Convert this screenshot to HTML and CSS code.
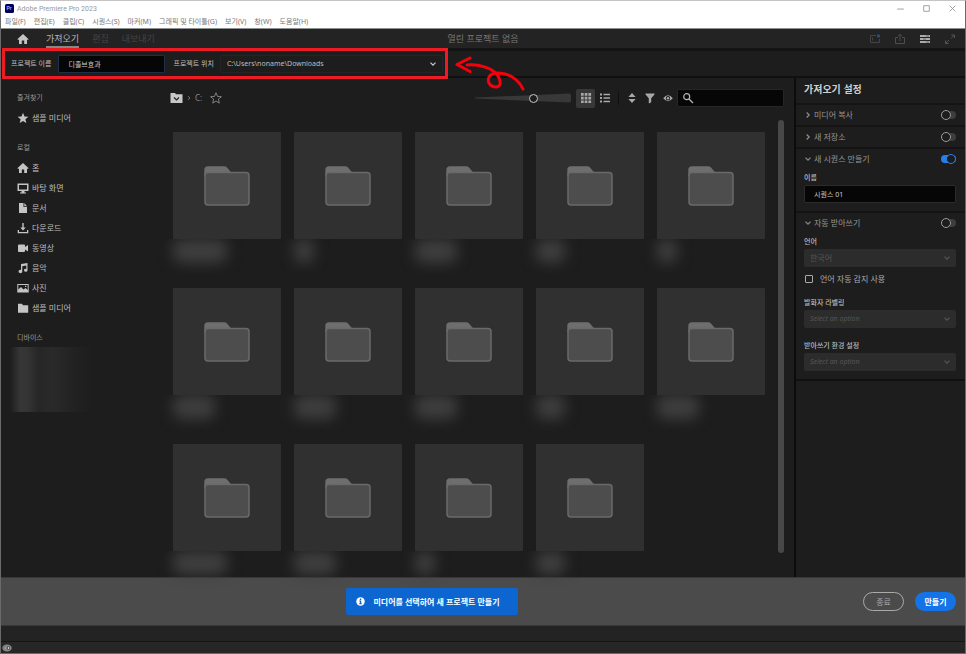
FILE: index.html
```html
<!DOCTYPE html>
<html lang="ko">
<head>
<meta charset="utf-8">
<meta name="viewport" content="width=device-width, initial-scale=1">
<title>Adobe Premiere Pro 2023</title>
<link rel="stylesheet" href="styles.css">
</head>
<body>
<svg class="defs" aria-hidden="true">
  <symbol id="home" viewBox="0 0 12 12"><path d="M6 1 .6 6v.8H2V11h2.8V7.6h2.4V11H10V6.800h1.400V6z"/></symbol>
  <symbol id="star" viewBox="0 0 12 12"><path d="m6 .8 1.500 3.600 3.900.3-3 2.500.9 3.900L6 9l-3.300 2.100.9-3.900-3-2.500 3.900-.3z"/></symbol>
  <symbol id="chev" viewBox="0 0 8 8"><path d="m1.500 2.700 2.500 2.500 2.500-2.500" fill="none" stroke="currentColor" stroke-width="1.200"/></symbol>
  <symbol id="folder" viewBox="0 0 46 40">
    <path d="M.3 8V4q0-3.700 3.700-3.700h16q2 0 3 1.200l4 4.800v4H.3z" fill="#6e6e6e"/>
    <rect x="1" y="6.500" width="44" height="32.500" rx="3" fill="#4d4d4d" stroke="#6a6a6a" stroke-width="1.500"/>
  </symbol>
</svg>
<div class="window">
  <header class="titlebar">
    <svg class="app-logo" viewBox="0 0 9 9" aria-hidden="true"><rect width="9" height="9" rx="1.500" fill="#00005b"/><text x="1.500" y="6.300" fill="#a9a9ff">Pr</text></svg>
    <span class="app-title">Adobe Premiere Pro 2023</span>
    <div class="window-buttons">
      <button aria-label="최소화"><svg viewBox="0 0 8 8"><path d="M1 4.500h6"/></svg></button>
      <button aria-label="최대화"><svg viewBox="0 0 8 8"><path d="M1.500 1.500h5v5h-5z"/></svg></button>
      <button aria-label="닫기"><svg viewBox="0 0 8 8"><path d="m1.500 1.500 5 5m0-5-5 5"/></svg></button>
    </div>
  </header>
  <nav class="menubar">
    <a href="#">파일(F)</a><a href="#">편집(E)</a><a href="#">클립(C)</a><a href="#">시퀀스(S)</a><a href="#">마커(M)</a><a href="#">그래픽 및 타이틀(G)</a><a href="#">보기(V)</a><a href="#">창(W)</a><a href="#">도움말(H)</a>
  </nav>
  <div class="tabbar">
    <nav class="tabs">
      <a href="#" class="home-link" aria-label="홈"><svg class="icon"><use href="#home"/></svg></a>
      <a href="#" class="tab active">가져오기</a>
      <a href="#" class="tab">편집</a>
      <a href="#" class="tab">내보내기</a>
    </nav>
    <span class="project-state">열린 프로젝트 없음</span>
    <div class="tab-tools">
      <button aria-label="작업 영역"><svg viewBox="0 0 12 12" fill="none" stroke="#444"><path d="M7 2.500H1.500v7h9V6"/><path d="M3.500 4.500v3"/><circle cx="9.500" cy="3" r="1.700" fill="#1f5088" stroke="none"/></svg></button>
      <button aria-label="내보내기"><svg viewBox="0 0 12 12" fill="none" stroke="#4d4d4d"><path d="M4 4.500H1.500v6h9v-6H8M6 8V1.500M4 3.200l2-2 2 2"/></svg></button>
      <button aria-label="진행률"><svg viewBox="0 0 12 12"><path d="M1 2h10v2H1zM1 5h10v2H1zM1 8h10v2H1z" fill="#aaa"/><path d="M7 2.500h3v1H7zM4 5.500h3v1H4zM7 8.500h3v1H7z" fill="#666"/></svg></button>
      <button aria-label="전체 화면"><svg viewBox="0 0 12 12" fill="none" stroke="#555"><path d="M7.500 2h3v3m0-3L7 5.500M4.500 10.500h-3v-3m0 3L5 7"/></svg></button>
    </div>
  </div>
  <section class="project-row">
    <label for="pname">프로젝트 이름</label>
    <input id="pname" class="field name-field" value="디졸브효과">
    <label for="ploc" class="loc-label">프로젝트 위치</label>
    <div class="select-wrap location">
      <select id="ploc"><option>C:\Users\noname\Downloads</option></select>
      <svg class="chev"><use href="#chev"/></svg>
    </div>
    <div class="highlight"></div>
    <svg class="arrow" viewBox="0 0 72 34" aria-hidden="true"><path d="M15 2 2 8.500 15 15.500M12 9C24 8 38 12 43 20c4 7 2 11-2 11-6 0-9-5-7-10 2-4 8-5 16-3 8 2 15 8 18 15"/></svg>
  </section>
  <main class="workspace">
    <aside class="sidebar">
      <h2>즐겨찾기</h2>
      <ul>
        <li><a href="#"><svg class="icon"><use href="#star"/></svg>샘플 미디어</a></li>
      </ul>
      <h2>로컬</h2>
      <ul>
        <li><a href="#"><svg class="icon"><use href="#home"/></svg>홈</a></li>
        <li><a href="#"><svg class="icon" viewBox="0 0 12 12"><path d="M.5 1.500h11v7.500H7.500v1.500H9v1H3v-1h1.500V9h-4zM2 3v4.500h8V3z" fill-rule="evenodd"/></svg>바탕 화면</a></li>
        <li><a href="#"><svg class="icon" viewBox="0 0 12 12"><path d="M2 1h4.500v4H10v6H2zM7.300 1 10 4.200H7.300z"/></svg>문서</a></li>
        <li><a href="#"><svg class="icon" viewBox="0 0 12 12"><path d="M5.300 1h1.400v4.500h2L6 8.500 3.300 5.500h2zM.7 8H2v2h8V8h1.300v3.300H.7z"/></svg>다운로드</a></li>
        <li><a href="#"><svg class="icon" viewBox="0 0 12 12"><path d="M1 3.500q0-1 1-1h5q1 0 1 1V5l3-2v6.500L8 7.500V9q0 1-1 1H2q-1 0-1-1z"/></svg>동영상</a></li>
        <li><a href="#"><svg class="icon" viewBox="0 0 12 12"><path d="m4 2 6.500-1v7.500a1.800 1.500 0 1 1-1.200-1.700V3.500l-4 .7v5.500A1.900 1.600 0 1 1 4 8z"/></svg>음악</a></li>
        <li><a href="#"><svg class="icon" viewBox="0 0 12 12"><path fill-rule="evenodd" d="M.3 2h11.400v8.500H.3zm1 1v4.500L4 5l2.500 2.500L8.500 6l2.200 2V3zM8 3.700h1.300V5H8z"/></svg>사진</a></li>
        <li><a href="#"><svg class="icon" viewBox="0 0 12 12"><path d="M1 1.700h4l1 1.500h5.200v7.500H1z"/></svg>샘플 미디어</a></li>
      </ul>
      <h2>디바이스</h2>
      <div class="devices"></div>
    </aside>
    <section class="browser">
      <div class="toolbar">
        <div class="crumbs">
          <button aria-label="폴더"><svg viewBox="0 0 13 12"><path d="M.5 1h4.500l1 1.300h6.500V11H.5z" fill="#c8c8c8"/><path d="m4 5.500 2.500 2.500L9 5.500" fill="none" stroke="#222" stroke-width="1.200"/></svg></button>
          <svg class="crumb-sep"><use href="#chev"/></svg>
          <a href="#">C:</a>
          <button class="fav" aria-label="즐겨찾기에 추가"><svg class="outline"><use href="#star"/></svg></button>
        </div>
        <div class="zoom">
          <svg viewBox="0 0 96 10" preserveAspectRatio="none" aria-hidden="true"><path d="M0 4.600 94 .5q2 0 2 2v5q0 2-2 2L0 5.600z" fill="#383838"/></svg>
          <input type="range" aria-label="축소판 크기" min="0" max="100" value="62">
        </div>
        <button class="view on" aria-label="격자 보기"><svg viewBox="0 0 12 12"><path d="M1 1h2.700v2.700H1zm3.700 0h2.700v2.700H4.700zm3.700 0h2.700v2.700H8.400zM1 4.700h2.700v2.700H1zm3.700 0h2.700v2.700H4.700zm3.700 0h2.700v2.700H8.400zM1 8.400h2.700v2.700H1zm3.700 0h2.700v2.700H4.700zm3.700 0h2.700v2.700H8.400z"/></svg></button>
        <button class="view" aria-label="목록 보기"><svg viewBox="0 0 12 12"><path d="M1 1.500h2v2H1zm3.500.3H11v1.400H4.500zM1 5h2v2H1zm3.500.3H11v1.400H4.500zM1 8.500h2v2H1zm3.500.3H11v1.400H4.500z"/></svg></button>
        <span class="divider"></span>
        <button class="tool" aria-label="정렬"><svg viewBox="0 0 12 12"><path d="m6 1 3.600 4H2.400zM2.400 7h7.200L6 11z"/></svg></button>
        <button class="tool" aria-label="필터"><svg viewBox="0 0 12 12"><path d="M1.500 1.500h9v1L7.200 6.300v3.900l-2.400 1.300V6.300L1.500 2.500z"/></svg></button>
        <button class="tool" aria-label="보기"><svg viewBox="0 0 12 12"><path fill-rule="evenodd" d="M1.200 6.300Q6 .4 10.800 6.300 6 12 1.200 6.300zm2.600 0a2.200 2.200 0 1 0 4.400 0 2.200 2.200 0 1 0-4.400 0z"/><circle cx="6" cy="6.300" r="1.200"/></svg></button>
        <label class="search"><svg viewBox="0 0 12 12"><circle cx="4.700" cy="4.700" r="3"/><path d="m7 7 4 4"/></svg><input type="search" aria-label="검색"></label>
      </div>
      <div class="scroll">
        <div class="grid">
          <div class="item w60"><div class="thumb"><svg><use href="#folder"/></svg></div><div class="name"></div></div>
          <div class="item w20"><div class="thumb"><svg><use href="#folder"/></svg></div><div class="name"></div></div>
          <div class="item w45"><div class="thumb"><svg><use href="#folder"/></svg></div><div class="name"></div></div>
          <div class="item w30"><div class="thumb"><svg><use href="#folder"/></svg></div><div class="name"></div></div>
          <div class="item w20"><div class="thumb"><svg><use href="#folder"/></svg></div><div class="name"></div></div>
          <div class="item w45"><div class="thumb"><svg><use href="#folder"/></svg></div><div class="name"></div></div>
          <div class="item w45"><div class="thumb"><svg><use href="#folder"/></svg></div><div class="name"></div></div>
          <div class="item w45"><div class="thumb"><svg><use href="#folder"/></svg></div><div class="name"></div></div>
          <div class="item w30"><div class="thumb"><svg><use href="#folder"/></svg></div><div class="name"></div></div>
          <div class="item w45"><div class="thumb"><svg><use href="#folder"/></svg></div><div class="name"></div></div>
          <div class="item w60"><div class="thumb"><svg><use href="#folder"/></svg></div><div class="name"></div></div>
          <div class="item w45"><div class="thumb"><svg><use href="#folder"/></svg></div><div class="name"></div></div>
          <div class="item w20"><div class="thumb"><svg><use href="#folder"/></svg></div><div class="name"></div></div>
          <div class="item w30"><div class="thumb"><svg><use href="#folder"/></svg></div><div class="name"></div></div>
        </div>
        <div class="scrollbar"></div>
      </div>
    </section>
    <aside class="settings">
      <h1>가져오기 설정</h1>
      <section>
        <div class="row"><svg class="chev closed"><use href="#chev"/></svg><label for="t1">미디어 복사</label><input id="t1" class="toggle" type="checkbox"></div>
      </section>
      <section>
        <div class="row"><svg class="chev closed"><use href="#chev"/></svg><label for="t2">새 저장소</label><input id="t2" class="toggle" type="checkbox"></div>
      </section>
      <section class="sequence">
        <div class="row"><svg class="chev"><use href="#chev"/></svg><label for="t3">새 시퀀스 만들기</label><input id="t3" class="toggle" type="checkbox" checked></div>
        <label class="caption" for="seq">이름</label>
        <input id="seq" class="field" value="시퀀스 01">
      </section>
      <section class="transcribe">
        <div class="row"><svg class="chev"><use href="#chev"/></svg><label for="t4">자동 받아쓰기</label><input id="t4" class="toggle" type="checkbox"></div>
        <label class="caption" for="lang">언어</label>
        <div class="select-wrap"><select id="lang" disabled><option>한국어</option></select><svg class="chev"><use href="#chev"/></svg></div>
        <label class="check"><input type="checkbox">언어 자동 감지 사용</label>
        <label class="caption" for="spk">발화자 라벨링</label>
        <div class="select-wrap empty"><select id="spk" disabled><option>Select an option</option></select><svg class="chev"><use href="#chev"/></svg></div>
        <label class="caption" for="pref">받아쓰기 환경 설정</label>
        <div class="select-wrap empty"><select id="pref" disabled><option>Select an option</option></select><svg class="chev"><use href="#chev"/></svg></div>
      </section>
    </aside>
  </main>
  <footer class="actions">
    <div class="notice"><svg viewBox="0 0 10 10" aria-hidden="true"><circle cx="5" cy="5" r="4.700" fill="#fff"/><path d="M4.300 1.700h1.500v1.500H4.300zM3.700 4h2.100v3h.7v1.100h-3V7h.8V5h-.6z" fill="#0d66d0"/></svg>미디어를 선택하여 새 프로젝트 만들기</div>
    <div class="buttons"><button class="quit">종료</button><button class="create">만들기</button></div>
  </footer>
  <div class="spacer"></div>
  <div class="status"><svg viewBox="0 0 10 8" aria-hidden="true"><ellipse cx="5" cy="4" rx="4.700" ry="3.500" fill="#8a8a8a"/><path d="M1.500 4q2-3 3 0-1 3-3 0M5.500 2.500h2v3h-2z" fill="#ccc" stroke="#333" stroke-width=".6"/></svg></div>
</div>
</body>
</html>
```
FILE: styles.css
```css
* { box-sizing: border-box; }
body {
  margin: 0;
  background: #8a8378;
  color: #bdbdbd;
  font: 8px/12px "Noto Sans", "Noto Sans CJK KR", sans-serif;
}
button, input, select { font: inherit; color: inherit; margin: 0; }
button { border: 0; padding: 0; background: none; display: flex; align-items: center; justify-content: center; }
a { color: inherit; text-decoration: none; }
ul { list-style: none; margin: 0; padding: 0; }
h1, h2 { margin: 0; }
.defs { position: absolute; width: 0; height: 0; }
.icon { width: 12px; height: 12px; fill: #c4c4c4; flex: none; }
.chev { width: 8px; height: 8px; flex: none; color: #8c8c8c; }

.window {
  min-height: 100vh;
  display: flex;
  flex-direction: column;
  background: #1d1d1d;
  border: 1px solid #6a6a6a;
  border-top-color: #c4c4c4;
}
.titlebar {
  display: flex;
  align-items: center;
  height: 15px;
  padding-left: 4px;
  gap: 3px;
  background: #fff;
  color: #999;
  font: 7px/12px Roboto, sans-serif;
}
.app-logo { width: 9px; height: 9px; }
.app-logo text { font: bold 5px "Liberation Sans", sans-serif; }
.window-buttons { margin-left: auto; display: flex; gap: 16px; padding-right: 8px; }
.window-buttons svg { width: 9px; height: 9px; fill: none; stroke: #999; stroke-width: .8; }
.window-buttons { gap: 17px; }
.menubar {
  display: flex;
  align-items: center;
  height: 13px;
  padding-left: 4px;
  gap: 8px;
  background: #fff;
  border-bottom: 1px solid #8c9090;
  color: #777;
  font-size: 7px;
}
.tabbar {
  display: grid;
  grid-template-columns: 1fr auto 1fr;
  align-items: start;
  height: 22px;
  background: #232323;
  border-bottom: 3px solid #141414;
  font-size: 9px;
}
.tabs { display: flex; padding-left: 16px; }
.home-link { display: flex; align-items: center; height: 20px; margin-right: 17px; }
.tab { height: 19px; line-height: 20px; margin-right: 13px; color: #444; }
.tab.active { color: #b8b8b8; box-shadow: inset 0 -2px #888; }
.project-state { line-height: 20px; color: #777; }
.tab-tools { display: flex; justify-content: flex-end; gap: 13px; padding: 4px 9px 0 0; }
.tab-tools svg { width: 12px; height: 12px; }

.project-row {
  position: relative;
  display: flex;
  align-items: center;
  height: 27px;
  padding-left: 10px;
  border-bottom: 2px solid #101010;
  font-size: 7px;
}
.field {
  height: 18px;
  background: #060606;
  border: 1px solid #2b2b2b;
  border-radius: 2px;
  padding: 0 9px;
  font-size: 7px;
  color: #ccc;
}
.name-field { width: 107px; margin-left: 7px; border-color: #1d3047; }
.loc-label { margin-left: 8px; }
.select-wrap { display: grid; align-items: center; }
.select-wrap > * { grid-area: 1 / 1; }
.select-wrap .chev { justify-self: end; margin-right: 5px; pointer-events: none; }
select { appearance: none; width: 100%; border: 0; background: none; padding: 0 6px; opacity: 1; }
.location { width: 223px; height: 18px; margin-left: 6px; border: 1px solid #252525; border-radius: 2px; }
.location .chev { color: #ccc; }
.highlight {
  position: absolute;
  left: 1px;
  top: -3px;
  width: 446px;
  height: 31px;
  border: 3px solid #ed1c24;
}
.arrow {
  position: absolute;
  left: 454px;
  top: 5px;
  width: 72px;
  height: 34px;
  z-index: 1;
  overflow: visible;
  fill: none;
  stroke: #f5000c;
  stroke-width: 3;
  stroke-linecap: round;
  stroke-linejoin: round;
}

.workspace { display: flex; flex: 1; }
.sidebar { width: 164px; padding: 14px 9px 0 16px; }
.sidebar h2 { font-size: 7px; font-weight: 400; line-height: 12px; color: #999; }
.sidebar ul { margin: 4px 0 14px; }
.sidebar a { display: flex; align-items: center; gap: 3px; height: 20px; }
.devices {
  width: 84px;
  height: 65px;
  margin: 3px 0 0 -7px;
  background: linear-gradient(90deg, #1d1d1d, #363636 12%, #353535 20%, #262626 34%, #2a2a2a 50%, #222 75%, #1d1d1d);
  border-radius: 4px;
}
.browser { flex: 1; min-width: 0; padding: 10px 10px 0 5px; display: flex; flex-direction: column; }
.toolbar { display: flex; align-items: center; height: 20px; }
.toolbar svg { width: 12px; height: 12px; fill: #a8a8a8; }
.crumbs { display: flex; align-items: center; flex: 1; gap: 3px; color: #888; }
.crumbs button svg { width: 13px; height: 12px; }
.crumbs .crumb-sep { width: 6px; height: 6px; transform: rotate(-90deg); }
.crumbs .fav { margin-left: 5px; }
.crumbs .outline { fill: none; stroke: #999; stroke-width: .8; }
.crumbs .fav .outline { width: 12px; }
.zoom { display: grid; align-items: center; width: 96px; margin-right: 5px; }
.zoom > * { grid-area: 1 / 1; }
.zoom svg { width: 100%; height: 10px; }
.zoom input { appearance: none; width: 100%; height: 10px; background: none; }
.zoom input::-webkit-slider-thumb { appearance: none; width: 9px; height: 9px; border: 1px solid #c8c8c8; border-radius: 50%; background: #1d1d1d; }
.view { width: 19px; height: 19px; border-radius: 2px; }
.view.on { background: #383838; }
.divider { width: 1px; height: 14px; margin: 0 4px; background: #101010; }
.tool { width: 18px; height: 18px; }
.search { display: flex; align-items: center; width: 107px; height: 18px; padding-left: 4px; background: #060606; border: 1px solid #262626; border-radius: 2px; }
.search svg { fill: none; stroke: #b5b5b5; stroke-width: 1.200; }
.search input { width: 80px; height: 14px; border: 0; background: none; outline: 0; }
.scroll { display: flex; flex: 1; padding-top: 12px; }
.grid { flex: 1; display: grid; grid-template-columns: repeat(5, minmax(0, 1fr)); gap: 0 13px; padding: 12px 13px 0 3px; align-content: start; }
.item { height: 156px; }
.thumb { display: flex; align-items: center; justify-content: center; height: 107px; background: #303030; border-radius: 1px; }
.thumb svg { width: 46px; height: 40px; }
.name { height: 24px; background: #3e3e3e; border-radius: 8px; filter: blur(7px); clip-path: inset(0 -20px -12px -20px); }
.w60 .name { width: 54px; }
.w45 .name { width: 42px; }
.w30 .name { width: 29px; }
.w20 .name { width: 20px; }
.grid .item:nth-child(n+11) { height: 131px; }
.scrollbar { width: 6px; height: 433px; border-radius: 3px; background: #484848; }

.settings { width: 171px; border-left: 2px solid #0c0c0c; }
.settings h1 { height: 25px; padding: 4px 8px; font-size: 10px; color: #d0d0d0; line-height: 14px; }
.settings section { border-top: 2px solid #141414; padding: 0 9px 0 8px; }
.row { display: flex; align-items: center; height: 20px; gap: 2px; color: #989898; }
.row label { flex: 1; }
.row .chev { margin-right: 0; }
.chev.closed { transform: rotate(-90deg); }
.toggle { appearance: none; display: flex; align-items: center; width: 15px; height: 8px; border-radius: 4px; background: #3d3d3d; }
.toggle::before { content: ""; flex: none; width: 8px; height: 8px; border: 1px solid #999; border-radius: 50%; background: #1d1d1d; }
.toggle:checked { background: #2680eb; justify-content: flex-end; }
.toggle:checked::before { border-color: #2680eb; }
.caption { display: block; height: 12px; margin: 3px 0 1px; font-size: 7px; font-weight: 500; color: #bbb; }
.settings .field { display: block; width: 100%; }
.settings .select-wrap { height: 18px; background: #2c2c2c; border-radius: 2px; color: #555; }
.settings .select-wrap .chev { color: #555; }
.empty { font-size: 7px; font-style: italic; }
.sequence .field { margin-bottom: 8px; }
.settings .transcribe { border-bottom: 2px solid #101010; padding-bottom: 8px; }
.check { display: flex; align-items: center; gap: 7px; height: 20px; margin: 2px 0 0; color: #aaa; }
.check input { appearance: none; width: 8px; height: 8px; margin-left: 1px; border: 1px solid #aaa; border-radius: 1px; }
.check + .caption { margin-top: 8px; }
.empty + .caption { margin-top: 12px; }

.actions { display: flex; align-items: center; height: 49px; background: #4b4b4b; border-top: 1px solid #383838; border-bottom: 1px solid #383838; padding-right: 9px; }
.notice { display: flex; align-items: center; gap: 8px; height: 27px; margin: 0 auto; padding: 0 18px 0 10px; background: #0d66d0; border-radius: 2px; color: #fff; font-weight: 700; }
.notice svg { width: 9px; height: 9px; }
.buttons { display: flex; gap: 11px; }
.buttons button { height: 19px; border-radius: 10px; }
.quit { width: 41px; border: 1px solid #aaa; color: #aaa; }
.create { width: 41px; background: #1473e6; color: #fff; font-weight: 700; }
.spacer { height: 16px; background: #232323; border-bottom: 1px solid #151515; }
.status { height: 11px; background: #262626; padding-left: 1px; display: flex; align-items: center; }
.status svg { width: 10px; height: 8px; }
```
